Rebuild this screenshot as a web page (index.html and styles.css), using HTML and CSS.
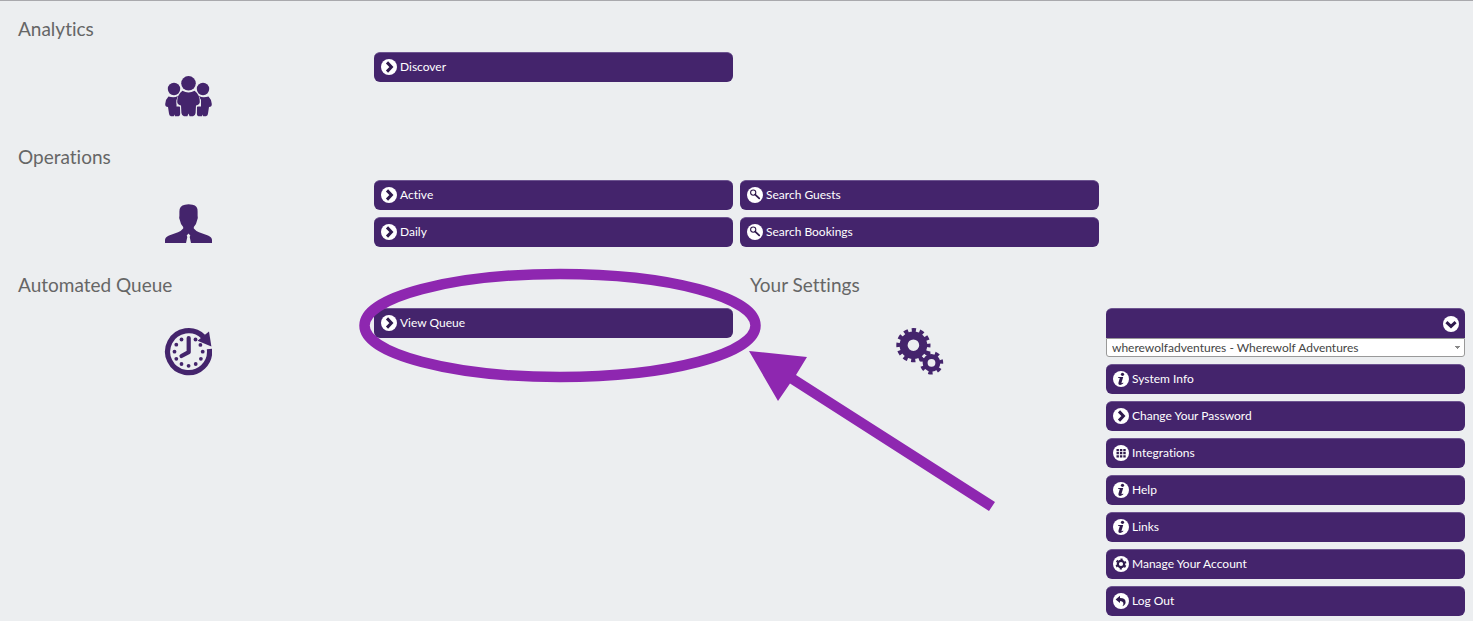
FILE: index.html
```html
<!DOCTYPE html>
<html lang="en">
<head>
    <meta charset="UTF-8">
    <meta name="viewport" content="width=device-width, initial-scale=1.0">
    <title>Dashboard</title>
    <link rel="stylesheet" href="styles.css">
</head>
<body>

<!-- shared button icons -->
<svg class="sprite" aria-hidden="true">
    <symbol id="icon-arrow" viewBox="0 0 16 16">
        <circle cx="8" cy="8" r="8" fill="#fff"/>
        <path d="M6 3.4 10.4 8 6 12.6" fill="none" stroke="#2f1a4d" stroke-width="3"/>
    </symbol>
    <symbol id="icon-down" viewBox="0 0 16 16">
        <circle cx="8" cy="8" r="8" fill="#fff"/>
        <path d="M3.4 6.2 8 10.4 12.6 6.2" fill="none" stroke="#2f1a4d" stroke-width="3"/>
    </symbol>
    <symbol id="icon-search" viewBox="0 0 16 16">
        <circle cx="8" cy="8" r="8" fill="#fff"/>
        <circle cx="6.2" cy="5.6" r="2.6" fill="none" stroke="#2f1a4d" stroke-width="1.1"/>
        <path d="M8.2 7.7 12.2 11.3" stroke="#2f1a4d" stroke-width="1.8" stroke-linecap="round"/>
    </symbol>
    <symbol id="icon-info" viewBox="0 0 16 16">
        <circle cx="8" cy="8" r="8" fill="#fff"/>
        <circle cx="9.5" cy="3.3" r="1.6" fill="#2f1a4d"/>
        <path d="M5.2 6H10.2L8.5 11.8Q8.4 12.6 10.2 11.6V12.6Q7.8 14.4 6.2 13.8 5 13.4 5.5 11.6L6.8 7.1H5.2Z" fill="#2f1a4d"/>
    </symbol>
    <symbol id="icon-grid" viewBox="0 0 16 16">
        <circle cx="8" cy="8" r="8" fill="#fff"/>
        <path d="M3.5 4h2.4v2.2H3.5zM6.9 4h2.4v2.2H6.9zM10.3 4h2.4v2.2h-2.4zM3.5 7.1h2.4v2.2H3.5zM6.9 7.1h2.4v2.2H6.9zM10.3 7.1h2.4v2.2h-2.4zM3.5 10.2h2.4v2.2H3.5zM6.9 10.2h2.4v2.2H6.9zM10.3 10.2h2.4v2.2h-2.4z" fill="#2f1a4d"/>
    </symbol>
    <symbol id="icon-gear" viewBox="0 0 16 16">
        <circle cx="8" cy="8" r="8" fill="#fff"/>
        <circle cx="8" cy="8" r="3.2" fill="none" stroke="#2f1a4d" stroke-width="2.2"/>
        <circle cx="8" cy="8" r="4.7" fill="none" stroke="#2f1a4d" stroke-width="1.6" stroke-dasharray="2.2 2.72" stroke-dashoffset="-1.4"/>
    </symbol>
    <symbol id="icon-back" viewBox="0 0 16 16">
        <circle cx="8" cy="8" r="8" fill="#fff"/>
        <path d="M2.6 6.4 7 2.8V5Q12.6 5 12.6 9.2 12.6 11.8 9.4 13.2 10.8 11.4 10.3 9.8 9.6 8 7 8V10Z" fill="#2f1a4d"/>
    </symbol>
</svg>

<main class="dashboard">
    <section class="panel">
        <h2>Analytics</h2>
        <div class="panel-icon">
            <svg width="48" height="48" viewBox="-1 -4 48 48" fill="#44246c" aria-hidden="true">
                <g id="side-person">
                    <circle cx="9" cy="13" r="6.2"/>
                    <path d="M3.5 20.4Q9 22.2 13 20 11.4 22.6 11.6 27 11.8 29.6 15 30.6L15.2 38Q15 40 13.6 40.3H10L9.4 38.6 8.8 40.3H6Q4 39.6 4 37.5L3 31Q0 31 .2 28 .6 23 3.5 20.4Z"/>
                </g>
                <use href="#side-person" transform="translate(47 0) scale(-1 1)"/>
                <path d="M16.5 14.5H30.5L36 24V30.5H31.6V41H15.9V30.5H11.5V24Z" fill="#eceef0"/>
                <circle cx="23.5" cy="7.5" r="8.4" fill="#eceef0"/>
                <circle cx="23.5" cy="7.3" r="7.3"/>
                <path d="M17.4 14.8Q23.5 18.2 29.6 14.8 34.8 18.8 34.8 26 34.6 28.8 31 29.6L30.6 37Q30.2 40 28 40.3H24.6L23.5 37.5 22.4 40.3H19Q16.8 40 16.4 37L16 29.6Q12.4 28.8 12.2 26 12.2 18.8 17.4 14.8Z"/>
            </svg>
        </div>
        <nav class="links">
            <a class="btn" href="#"><svg><use href="#icon-arrow"/></svg>Discover</a>
        </nav>
    </section>

    <section class="panel">
        <h2>Operations</h2>
        <div class="panel-icon">
            <svg width="48" height="48" viewBox="-1 -4 48 48" fill="#44246c" aria-hidden="true">
                <path d="M14.4 7.5Q14.2 2 20 .8 23.5-.4 27.5.8 33 2 32.6 7.5V11.5Q33.2 13.8 32.2 16 31.6 20 28.8 23V24.4Q31 27 34 28.2L43 31.6Q47 33.4 47 36V39H0V36Q0 33.4 4 31.6L13 28.2Q16 27 18.2 24.4V23Q15.4 20 14.8 16 13.8 13.8 14.4 11.5Z"/>
                <path d="M23.5 29.4 25.3 31.6 24.7 33 26 39H21L22.3 33 21.7 31.6Z" fill="#eceef0"/>
            </svg>
        </div>
        <nav class="links">
            <a class="btn" href="#"><svg><use href="#icon-arrow"/></svg>Active</a>
            <a class="btn" href="#"><svg><use href="#icon-arrow"/></svg>Daily</a>
        </nav>
        <nav class="links">
            <a class="btn" href="#"><svg><use href="#icon-search"/></svg>Search Guests</a>
            <a class="btn" href="#"><svg><use href="#icon-search"/></svg>Search Bookings</a>
        </nav>
    </section>

    <div class="split">
        <section class="panel half">
            <h2>Automated Queue</h2>
            <div class="panel-icon">
                <svg width="48" height="48" viewBox="-1 0 48 48" fill="#44246c" aria-hidden="true">
                    <path d="M38.4 8.8A21 21 0 1 0 44.4 21" fill="none" stroke="#44246c" stroke-width="5.2"/>
                    <path d="M44 3.5 46.4 18.5 32.5 12.8Z"/>
                    <path d="M23.7 10V24.2L16.5 28" fill="none" stroke="#44246c" stroke-width="4.2" stroke-linecap="round" stroke-linejoin="round"/>
                    <g>
                        <circle cx="16.5" cy="11.5" r="1.9"/><circle cx="11.3" cy="16.7" r="1.9"/>
                        <circle cx="9.5" cy="23.7" r="1.9"/><circle cx="11.3" cy="30.8" r="1.9"/>
                        <circle cx="16.5" cy="36" r="1.9"/><circle cx="23.6" cy="37.8" r="1.9"/>
                        <circle cx="30.7" cy="36" r="1.9"/><circle cx="35.9" cy="30.8" r="1.9"/>
                        <circle cx="37.7" cy="23.7" r="1.9"/><circle cx="35.4" cy="16.9" r="1.9"/>
                        <circle cx="30.5" cy="11.5" r="1.9"/>
                    </g>
                </svg>
            </div>
            <nav class="links highlighted">
                <a class="btn" href="#"><svg><use href="#icon-arrow"/></svg>View Queue</a>
                <svg class="callout" viewBox="0 0 640 250" aria-hidden="true">
                    <ellipse cx="202" cy="59.5" rx="195.5" ry="51.5" fill="none" stroke="#8e27b0" stroke-width="10.5"/>
                    <path d="M391 85 449 91 438 109 637 236 631 245 432 117.5 420 135Z" fill="#8e27b0"/>
                </svg>
            </nav>
        </section>

        <section class="panel half">
            <h2>Your Settings</h2>
            <div class="panel-icon">
                <svg width="48" height="48" viewBox="0 0 48 48" fill="none" stroke="#44246c" aria-hidden="true">
                    <circle cx="17.4" cy="17.2" r="9.8" stroke-width="8"/>
                    <circle cx="17.4" cy="17.2" r="15" stroke-width="4.2" stroke-dasharray="4.3 3.554" stroke-dashoffset="2.15"/>
                    <circle cx="35.5" cy="34.8" r="6.4" stroke-width="5"/>
                    <circle cx="35.5" cy="34.8" r="9.8" stroke-width="3.8" stroke-dasharray="4.2 4.597" stroke-dashoffset="3.4"/>
                </svg>
            </div>
            <nav class="links">
                <div class="account">
                    <button class="account-toggle" type="button" aria-label="Toggle account list"><svg><use href="#icon-down"/></svg></button>
                    <select class="account-select" aria-label="Account">
                        <option>wherewolfadventures - Wherewolf Adventures</option>
                    </select>
                </div>
                <a class="btn" href="#"><svg><use href="#icon-info"/></svg>System Info</a>
                <a class="btn" href="#"><svg><use href="#icon-arrow"/></svg>Change Your Password</a>
                <a class="btn" href="#"><svg><use href="#icon-grid"/></svg>Integrations</a>
                <a class="btn" href="#"><svg><use href="#icon-info"/></svg>Help</a>
                <a class="btn" href="#"><svg><use href="#icon-info"/></svg>Links</a>
                <a class="btn" href="#"><svg><use href="#icon-gear"/></svg>Manage Your Account</a>
                <a class="btn" href="#"><svg><use href="#icon-back"/></svg>Log Out</a>
            </nav>
        </section>
    </div>
</main>

</body>
</html>
```
FILE: styles.css
```css
* {
    box-sizing: border-box;
}

body {
    margin: 0;
    border-top: 1px solid #a9a9ad;
    background-color: #eceef0;
    color: #666;
    font-family: Lato, sans-serif;
    font-size: 12px;
    font-variant-ligatures: none;
}

.sprite {
    display: none;
}

.dashboard {
    padding: 7px 8px 5px;
}

.panel {
    display: grid;
    grid-template-columns: repeat(4, minmax(0, 1fr));
    column-gap: 7px;
    align-items: start;
}

.panel.half {
    grid-template-columns: repeat(2, minmax(0, 1fr));
}

.split {
    display: grid;
    grid-template-columns: repeat(2, minmax(0, 1fr));
    column-gap: 7px;
    align-items: start;
}

h2 {
    grid-column: 1 / -1;
    margin: 0;
    padding: 0 0 2px 10px;
    font-size: 19px;
    font-weight: normal;
    line-height: 42px;
}

.panel-icon {
    padding: 20px 0 16px;
}

.panel-icon svg {
    display: block;
    margin: 0 auto;
}

.links {
    display: flex;
    flex-direction: column;
    gap: 7px;
}

.btn {
    display: flex;
    align-items: center;
    gap: 3px;
    height: 30px;
    padding: 0 7px 2px;
    border-top: 1px solid #6d5490;
    border-radius: 6px;
    background-color: #44246c;
    color: #fff;
    text-decoration: none;
}

.btn:hover {
    background-color: #553080;
}

.btn svg,
.account-toggle svg {
    width: 16px;
    height: 16px;
}

.account {
    display: flex;
    flex-direction: column;
}

.account-toggle {
    display: flex;
    align-items: center;
    justify-content: flex-end;
    height: 30px;
    padding: 0 6px;
    border: 0;
    border-top: 1px solid #6d5490;
    border-radius: 6px 6px 0 0;
    background-color: #44246c;
    cursor: pointer;
}

.account-select {
    appearance: none;
    width: 100%;
    height: 19px;
    padding: 0 5px;
    border: 1px solid #999;
    border-radius: 0 0 3px 3px;
    /* small caret on the right */
    background: linear-gradient(#888, #888) right 4px top 7px / 5px 1px no-repeat,
        linear-gradient(#888, #888) right 5px top 8px / 3px 1px no-repeat,
        linear-gradient(#888, #888) right 6px top 9px / 1px 1px no-repeat,
        #fff;
    color: #444;
    font-family: inherit;
    font-size: 12px;
}

.highlighted {
    position: relative;
}

/* ring and arrow drawn over the queue button */
.callout {
    position: absolute;
    top: -42px;
    left: -16px;
    z-index: 1;
    width: 640px;
    height: 250px;
    pointer-events: none;
}
```
